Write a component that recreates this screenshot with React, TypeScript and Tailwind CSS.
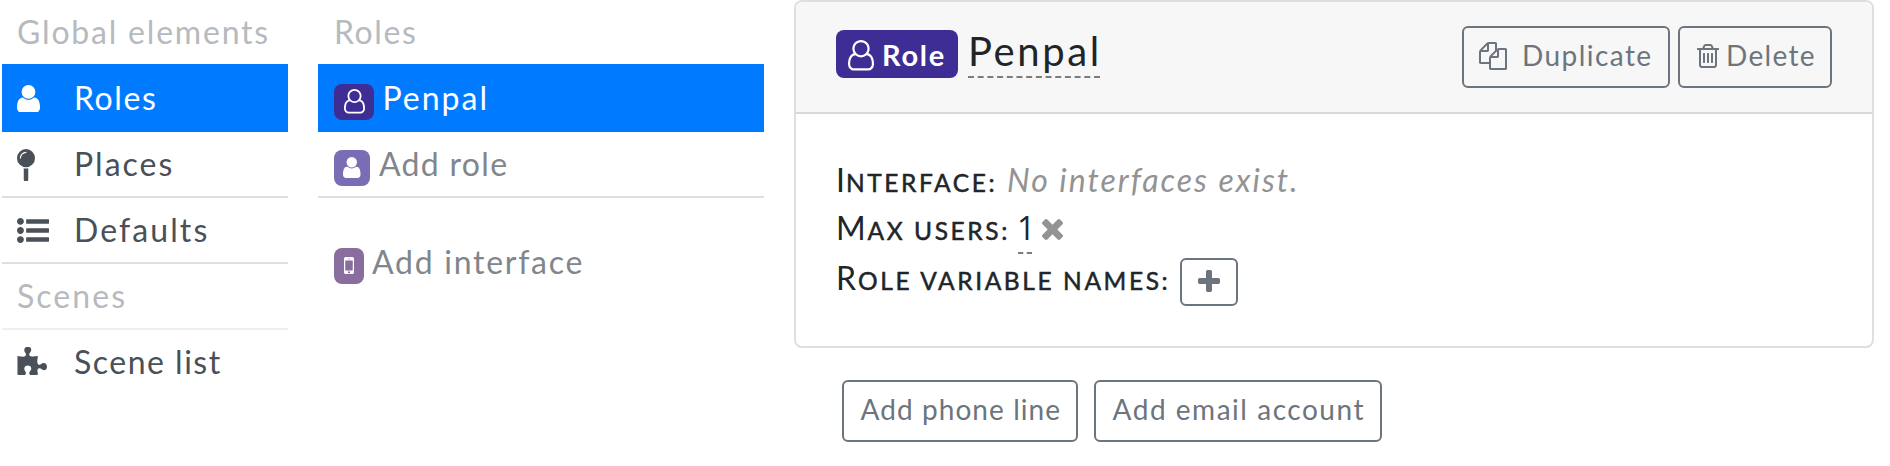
import type { ReactNode } from "react";

type IconProps = { viewBox: string; d: string; className: string };

function Icon({ viewBox, d, className }: IconProps) {
  return (
    <svg viewBox={viewBox} preserveAspectRatio="none" fill="currentColor" className={`shrink-0 ${className}`} aria-hidden="true">
      <path d={d} />
    </svg>
  );
}

const user = {
  viewBox: "256 128 1280 1536",
  d: "M1536 1399q0 109-62.5 187t-150.5 78h-854q-88 0-150.5-78t-62.5-187q0-85 8.5-160.5t31.5-152 58.5-131 94-89 134.5-34.5q131 128 313 128t313-128q76 0 134.5 34.5t94 89 58.5 131 31.5 152 8.5 160.5zm-256-887q0 159-112.5 271.5t-271.5 112.5-271.5-112.5-112.5-271.5 112.5-271.5 271.5-112.5 271.5 112.5 112.5 271.5z",
};
const userOutline = {
  viewBox: "128 0 1536 1792",
  d: "M1329 784q47 14 89.5 38t89 73 79.5 115.5 55 172 22 236.5q0 154-100 263.5t-241 109.5h-854q-141 0-241-109.5t-100-263.5q0-131 22-236.5t55-172 79.5-115.5 89-73 89.5-38q-79-125-79-272 0-104 40.5-198.5t109.5-163.5 163.5-109.5 198.5-40.5 198.5 40.5 163.5 109.5 109.5 163.5 40.5 198.5q0 147-79 272zm-433-656q-159 0-271.5 112.5t-112.5 271.5 112.5 271.5 271.5 112.5 271.5-112.5 112.5-271.5-112.5-271.5-271.5-112.5zm427 1536q88 0 150.5-71.5t62.5-173.5q0-239-78.5-377t-225.5-145q-145 127-336 127t-336-127q-147 7-225.5 145t-78.5 377q0 102 62.5 173.5t150.5 71.5h854z",
};
const mapPin = {
  viewBox: "384 0 1024 1792",
  d: "M896 1088q66 0 128-15v655q0 26-19 45t-45 19h-128q-26 0-45-19t-19-45v-655q62 15 128 15zm0-1088q212 0 362 150t150 362-150 362-362 150-362-150-150-362 150-362 362-150zm0 224q14 0 23-9t9-23-9-23-23-9q-146 0-249 103t-103 249q0 14 9 23t23 9 23-9 9-23q0-119 84.5-203.5t203.5-84.5z",
};
const listUl = {
  viewBox: "0 192 1792 1408",
  d: "M384 1408q0 80-56 136t-136 56-136-56-56-136 56-136 136-56 136 56 56 136zm0-512q0 80-56 136t-136 56-136-56-56-136 56-136 136-56 136 56 56 136zm1408 416v192q0 13-9.5 22.5t-22.5 9.5h-1216q-13 0-22.5-9.5t-9.5-22.5v-192q0-13 9.5-22.5t22.5-9.5h1216q13 0 22.5 9.5t9.5 22.5zm-1408-928q0 80-56 136t-136 56-136-56-56-136 56-136 136-56 136 56 56 136zm1408 416v192q0 13-9.5 22.5t-22.5 9.5h-1216q-13 0-22.5-9.5t-9.5-22.5v-192q0-13 9.5-22.5t22.5-9.5h1216q13 0 22.5 9.5t9.5 22.5zm0-512v192q0 13-9.5 22.5t-22.5 9.5h-1216q-13 0-22.5-9.5t-9.5-22.5v-192q0-13 9.5-22.5t22.5-9.5h1216q13 0 22.5 9.5t9.5 22.5z",
};
const puzzle = {
  viewBox: "64 0 1691 1536",
  d: "M1755 1083q0 81-44.5 135t-123.5 54q-41 0-77.5-17.5t-59-38-56.5-38-71-17.5q-110 0-110 124 0 39 16 115t15 115v5q-22 0-33 1-34 3-97.5 11.5t-115.5 13.5-98 5q-61 0-103-26.5t-42-83.5q0-37 17.5-71t38-56.5 38-59 17.5-77.5q0-79-54-123.5t-135-44.5q-84 0-143 45.5t-59 127.5q0 43 15 83t33.5 64.5 33.5 53 15 50.5q0 45-46 89-37 35-117 35-95 0-245-24-9-2-27.5-4t-27.5-4l-13-2q-1 0-3-1-2 0-2-1v-1024q2 1 17.5 3.5t34 5 21.5 3.5q150 24 245 24 80 0 117-35 46-44 46-89 0-22-15-50.5t-33.5-53-33.5-64.5-15-83q0-82 59-127.5t144-45.5q80 0 134 44.5t54 123.5q0 41-17.5 77.5t-38 59-38 56.5-17.5 71q0 57 42 83.5t103 26.5q64 0 180-15t163-17v2q-1 2-3.5 17.5t-5 34-3.5 21.5q-24 150-24 245 0 80 35 117 44 46 89 46 22 0 50.5-15t53-33.5 64.5-33.5 83-15q82 0 127.5 59t45.5 143z",
};
const mobile = {
  viewBox: "512 256 768 1280",
  d: "M976 1408q0-33-23.5-56.5t-56.5-23.5-56.5 23.5-23.5 56.5 23.5 56.5 56.5 23.5 56.5-23.5 23.5-56.5zm208-160v-704q0-13-9.5-22.5t-22.5-9.5h-512q-13 0-22.5 9.5t-9.5 22.5v704q0 13 9.5 22.5t22.5 9.5h512q13 0 22.5-9.5t9.5-22.5zm-192-848q0-16-16-16h-160q-16 0-16 16t16 16h160q16 0 16-16zm288-16v1024q0 52-38 90t-90 38h-512q-52 0-90-38t-38-90v-1024q0-52 38-90t90-38h512q52 0 90 38t38 90z",
};
const files = {
  viewBox: "0 0 1792 1792",
  d: "M1696 384q40 0 68 28t28 68v1216q0 40-28 68t-68 28h-960q-40 0-68-28t-28-68v-288h-544q-40 0-68-28t-28-68v-672q0-40 20-88t48-76l408-408q28-28 76-48t88-20h416q40 0 68 28t28 68v328q68-40 128-40h416zm-544 213l-299 299h299v-299zm-640-384l-299 299h299v-299zm196 647l316-316v-416h-384v416q0 40-28 68t-68 28h-416v640h512v-256q0-40 20-88t48-76zm956 804v-1152h-384v416q0 40-28 68t-68 28h-416v640h896z",
};
const trash = {
  viewBox: "192 128 1408 1536",
  d: "M704 736v576q0 14-9 23t-23 9h-64q-14 0-23-9t-9-23v-576q0-14 9-23t23-9h64q14 0 23 9t9 23zm256 0v576q0 14-9 23t-23 9h-64q-14 0-23-9t-9-23v-576q0-14 9-23t23-9h64q14 0 23 9t9 23zm256 0v576q0 14-9 23t-23 9h-64q-14 0-23-9t-9-23v-576q0-14 9-23t23-9h64q14 0 23 9t9 23zm128 724v-948h-896v948q0 22 7 40.5t14.5 27 10.5 8.5h832q3 0 10.5-8.5t14.5-27 7-40.5zm-672-1076h448l-48-117q-7-9-17-11h-317q-10 2-17 11zm928 32v64q0 14-9 23t-23 9h-96v948q0 83-47 143.5t-113 60.5h-832q-66 0-113-58.5t-47-141.5v-952h-96q-14 0-23-9t-9-23v-64q0-14 9-23t23-9h309l70-167q15-37 54-63t79-26h320q40 0 79 26t54 63l70 167h309q14 0 23 9t9 23z",
};
const times = {
  viewBox: "302 366 1188 1188",
  d: "M1490 1322q0 40-28 68l-136 136q-28 28-68 28t-68-28l-294-294-294 294q-28 28-68 28t-68-28l-136-136q-28-28-28-68t28-68l294-294-294-294q-28-28-28-68t28-68l136-136q28-28 68-28t68 28l294 294 294-294q28-28 68-28t68 28l136 136q28 28 28 68t-28 68l-294 294 294 294q28 28 28 68z",
};
const plus = {
  viewBox: "192 128 1408 1408",
  d: "M1600 736v192q0 40-28 68t-68 28h-416v416q0 40-28 68t-68 28h-192q-40 0-68-28t-28-68v-416h-416q-40 0-68-28t-28-68v-192q0-40 28-68t68-28h416v-416q0-40 28-68t68-28h192q40 0 68 28t28 68v416h416q40 0 68 28t28 68z",
};

function MenuItem({ icon, className, children }: { icon: ReactNode; className: string; children: ReactNode }) {
  return (
    <a className={`flex items-center pl-[15px] ${className}`}>
      <span className="flex w-[57px] shrink-0">{icon}</span>
      {children}
    </a>
  );
}

function Label({ first, rest, className }: { first: string; rest: string; className: string }) {
  return (
    <span className={`shrink-0 whitespace-nowrap ${className}`}>
      {first}
      <span className="text-[24.5px] leading-none tracking-[2.6px] uppercase [-webkit-text-stroke:0.5px_currentColor]">{rest}</span>
    </span>
  );
}

function OutlineButton({ className, children }: { className: string; children: ReactNode }) {
  return (
    <button className={`flex h-[62px] shrink-0 items-center rounded-[6px] border-2 border-[#6c757d] text-[28px] whitespace-nowrap text-[#6c757d] ${className}`}>
      {children}
    </button>
  );
}

export default function App() {
  return (
    <div className="flex h-[466px] w-[1890px] items-start overflow-hidden bg-white pl-0.5 font-['Lato',sans-serif] text-[32px] leading-[48px] text-[#212529]">
      <nav className="flex w-[286px] shrink-0 flex-col text-[#495057]">
        <h2 className="flex h-16 items-center pl-[15px] tracking-[1.8px] whitespace-nowrap text-[#b6babf]">Global elements</h2>
        <MenuItem className="h-[68px] bg-[#007bff] tracking-[1.6px] text-white" icon={<Icon {...user} className="mt-px h-[27.5px] w-[23px]" />}>
          Roles
        </MenuItem>
        <MenuItem className="h-[66px] border-b-2 border-[#dfdfdf] tracking-[2px]" icon={<Icon {...mapPin} className="mt-px h-8 w-[18px]" />}>
          Places
        </MenuItem>
        <MenuItem className="h-[66px] border-b-2 border-[#dfdfdf] tracking-[2.1px]" icon={<Icon {...listUl} className="mt-px h-[25px] w-8" />}>
          Defaults
        </MenuItem>
        <h2 className="flex h-[66px] items-center border-b-2 border-[#efefef] pl-[15px] tracking-[2.05px] text-[#b6babf]">Scenes</h2>
        <MenuItem className="h-16 tracking-[1.5px]" icon={<Icon {...puzzle} className="-mt-0.5 h-7 w-[30px]" />}>
          Scene list
        </MenuItem>
      </nav>

      <section className="ml-[30px] flex w-[446px] shrink-0 flex-col text-[#80868b]">
        <h2 className="flex h-16 items-center pl-4 tracking-[1.6px] text-[#b6babf]">Roles</h2>
        <a className="flex h-[68px] items-center gap-[8.5px] bg-[#007bff] pl-4 tracking-[2px] text-white">
          <span className="mt-2 flex h-9 w-10 items-center justify-center rounded-lg bg-[#3f2d96]">
            <Icon {...userOutline} className="-mt-px h-[24.5px] w-[21px]" />
          </span>
          Penpal
        </a>
        <a className="flex h-[66px] items-center gap-[9px] border-b-2 border-[#dfdfdf] pl-4 tracking-[1.3px]">
          <span className="mt-2 flex size-9 items-center justify-center rounded-lg bg-[#7b6cb6] text-white">
            <Icon {...user} className="-mt-px h-[21px] w-[17.5px]" />
          </span>
          Add role
        </a>
        <a className="mt-8 flex h-16 items-center gap-2 pl-4 tracking-[1.74px]">
          <span className="mt-2 flex h-9 w-[30px] items-center justify-center rounded-lg bg-[#8a6d9f] text-white">
            <Icon {...mobile} className="-mt-px h-[17px] w-[10px]" />
          </span>
          Add interface
        </a>
      </section>

      <main className="ml-[30px] w-[1080px] shrink-0">
        <article className="h-[348px] overflow-hidden rounded-lg border-2 border-[#dfdfdf] bg-white">
          <header className="flex h-28 items-start justify-between border-b-2 border-[#d8d8d8] bg-[#f7f7f7] pr-10 pl-10">
            <div className="flex items-end gap-[10px] pt-[23px]">
              <span className="flex h-12 w-[122px] items-center gap-2 rounded-lg bg-[#3f2d96] pl-3 text-[29px] font-bold tracking-[1.7px] text-white">
                <Icon {...userOutline} className="mt-[3px] h-[30.5px] w-[26px]" />
                <span className="mt-px">Role</span>
              </span>
              <h1 className="h-[53px] w-[132px] border-b-2 border-dashed border-[#7c7c7c] text-[40px] leading-[53px] tracking-[2.6px] whitespace-nowrap">Penpal</h1>
            </div>
            <div className="flex gap-2 pt-6">
              <OutlineButton className="w-[208px] gap-[15px] pl-[15px] tracking-[1.44px]">
                <Icon {...files} className="-mt-0.5 size-7" />
                <span className="-mt-1">Duplicate</span>
              </OutlineButton>
              <OutlineButton className="w-[154px] gap-[7.5px] pl-[16.5px] tracking-[1.31px]">
                <Icon {...trash} className="-mt-0.5 h-6 w-[22px]" />
                <span className="-mt-1">Delete</span>
              </OutlineButton>
            </div>
          </header>
          <div className="flex flex-col pt-[42px] pl-10">
            <div className="flex h-12">
              <Label first="I" rest="nterface:" className="w-[171px] tracking-[1px]" />
              <em className="tracking-[2px] whitespace-nowrap text-[#939393]">No interfaces exist.</em>
            </div>
            <div className="flex h-12">
              <Label first="M" rest="ax users:" className="w-[182px] tracking-[1.8px]" />
              <span className="h-[50px] w-[14px] border-b-2 border-dashed border-[#7c7c7c] font-['Open_Sans',sans-serif]">
                <span className="-ml-px">1</span>
              </span>
              <Icon {...times} className="mt-[15px] ml-[10px] size-[21px] text-[#939393]" />
            </div>
            <div className="flex h-[52px] items-center">
              <Label first="R" rest="ole variable names:" className="w-[344px] tracking-[2px]" />
              <button className="mt-2 flex h-12 w-[58px] items-center justify-center rounded-[6px] border-2 border-[#6c757d] text-[#6c757d]">
                <Icon {...plus} className="-mt-0.5 size-[22px]" />
              </button>
            </div>
          </div>
        </article>
        <div className="mt-8 ml-12 flex gap-4">
          <OutlineButton className="w-[236px] pl-[16.5px] tracking-[1.07px]">
            <span className="-mt-1">Add phone line</span>
          </OutlineButton>
          <OutlineButton className="w-[288px] pl-[16.5px] tracking-[1.53px]">
            <span className="-mt-1">Add email account</span>
          </OutlineButton>
        </div>
      </main>
    </div>
  );
}
